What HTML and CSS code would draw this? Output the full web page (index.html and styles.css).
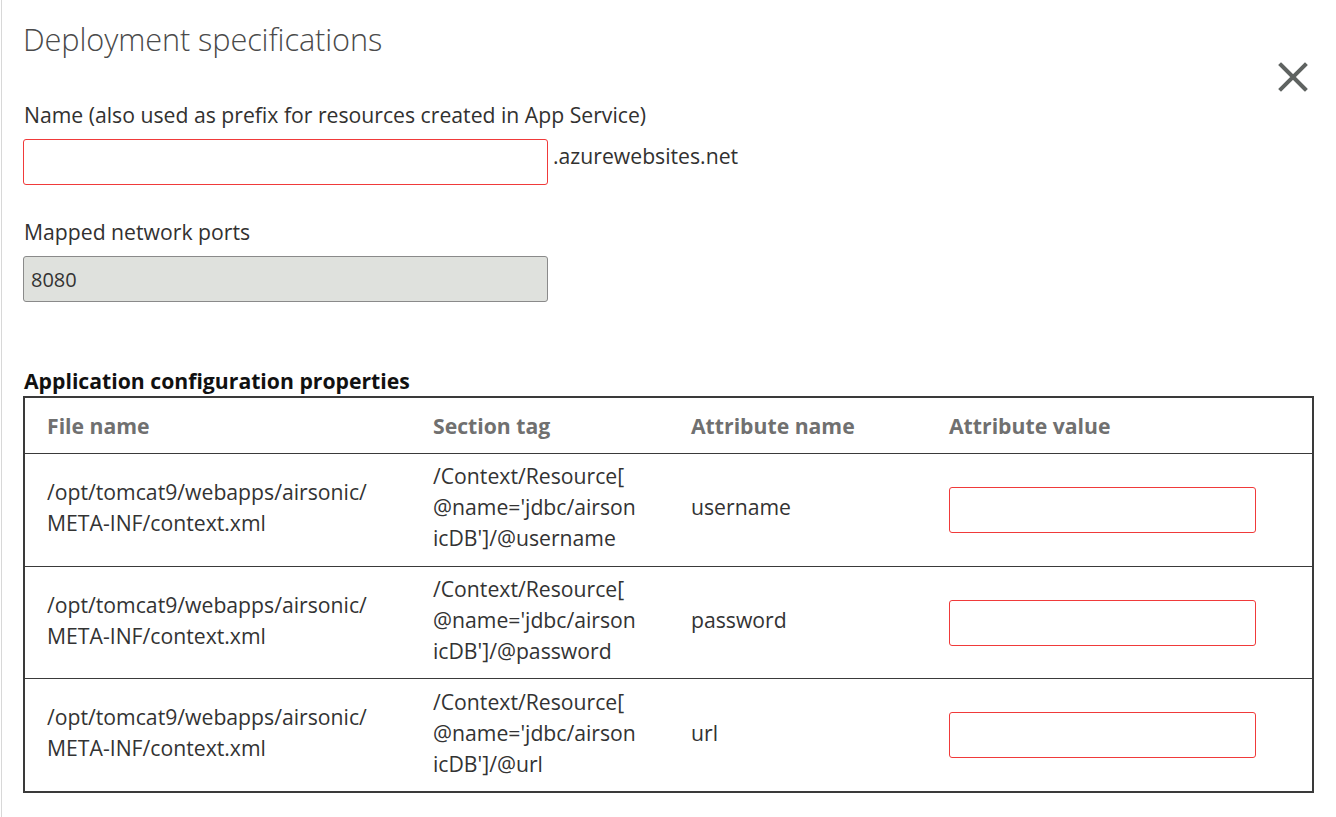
FILE: index.html
```html
<!DOCTYPE html>
<html>
<head>
<meta charset="utf-8">
<link rel="stylesheet" href="styles.css">
</head>
<body>
<div class="panel">
  <h1 class="title">Deployment specifications</h1>
  <button class="close" aria-label="Close">
    <svg width="30" height="30" viewBox="0 0 30 30"><path d="M3 3 L27 27 M27 3 L3 27" stroke="#5f6361" stroke-width="4" stroke-linecap="square"/></svg>
  </button>

  <div class="field">
    <label class="label">Name (also used as prefix for resources created in App Service)</label>
    <div class="row">
      <input class="input invalid" type="text">
      <span class="suffix">.azurewebsites.net</span>
    </div>
  </div>

  <div class="field field-ports">
    <label class="label">Mapped network ports</label>
    <input class="input disabled" type="text" value="8080" disabled>
  </div>

  <h2 class="section">Application configuration properties</h2>
  <div class="table">
    <div class="tr th">
      <div class="cell">File name</div>
      <div class="cell">Section tag</div>
      <div class="cell">Attribute name</div>
      <div class="cell">Attribute value</div>
    </div>
    <div class="tr">
      <div class="cell">/opt/tomcat9/webapps/airsonic/<br>META-INF/context.xml</div>
      <div class="cell">/Context/Resource[<br>@name='jdbc/airson<br>icDB']/@username</div>
      <div class="cell">username</div>
      <div class="cell cell-input"><input class="input invalid small" type="text"></div>
    </div>
    <div class="tr">
      <div class="cell">/opt/tomcat9/webapps/airsonic/<br>META-INF/context.xml</div>
      <div class="cell">/Context/Resource[<br>@name='jdbc/airson<br>icDB']/@password</div>
      <div class="cell">password</div>
      <div class="cell cell-input"><input class="input invalid small" type="text"></div>
    </div>
    <div class="tr">
      <div class="cell">/opt/tomcat9/webapps/airsonic/<br>META-INF/context.xml</div>
      <div class="cell">/Context/Resource[<br>@name='jdbc/airson<br>icDB']/@url</div>
      <div class="cell">url</div>
      <div class="cell cell-input"><input class="input invalid small" type="text"></div>
    </div>
  </div>
</div>
</body>
</html>
```

FILE: styles.css
```css
html, body {
  margin: 0;
  padding: 0;
  background: #fff;
}
body {
  font-family: "Open Sans", "Noto Sans", sans-serif;
  color: #333;
  padding-left: 1px;
}
.panel {
  position: relative;
  border-left: 1px solid #d8d8d8;
  min-height: 817px;
  box-sizing: border-box;
  padding: 19px 22px 0 21px;
}
.title {
  margin: 0;
  font-weight: 300;
  font-size: 30.7px;
  line-height: 40px;
  color: #4a4a4a;
  letter-spacing: -0.1px;
}
.close {
  position: absolute;
  top: 62px;
  right: 28px;
  background: none;
  border: 0;
  padding: 0;
  width: 30px;
  height: 30px;
}
.field {
  margin-top: 42px;
}
.label {
  display: block;
  font-size: 21.2px;
  line-height: 28px;
  color: #323130;
  margin-left: 1px;
}
.row {
  display: flex;
  align-items: flex-start;
  margin-top: 10px;
}
.input {
  box-sizing: border-box;
  width: 525px;
  height: 46px;
  border: 1px solid #8a8886;
  border-radius: 3px;
  font-family: inherit;
  font-size: 20px;
  padding: 0 7px;
  background: #fff;
  outline: none;
  display: block;
}
.input.invalid {
  border-color: #f03a3a;
}
.input.disabled {
  background: #dfe1dd;
  border-color: #8a8a8a;
  color: #333;
  margin-top: 10px;
}
.suffix {
  font-size: 21.2px;
  line-height: 28px;
  color: #323130;
  margin-left: 5px;
  margin-top: 3px;
}
.field-ports {
  margin-top: 33px;
}
.section {
  margin: 65px 0 0 1px;
  font-size: 21.2px;
  line-height: 28px;
  font-weight: 700;
  color: #111;
}
.table {
  margin-top: 1px;
  border: 2px solid #3a3a3a;
  width: 1291px;
  box-sizing: border-box;
  display: flex;
  flex-direction: column;
}
.tr {
  display: grid;
  grid-template-columns: 386px 258px 258px 1fr;
  height: 112.7px;
  align-items: center;
  border-top: 1px solid #3a3a3a;
  box-sizing: border-box;
}
.tr.th {
  height: 55px;
  border-top: 0;
}
.tr.th .cell {
  font-weight: 700;
  color: #707070;
  padding-bottom: 0;
}
.cell {
  padding-left: 22px;
  padding-bottom: 6px;
  font-size: 21.2px;
  line-height: 31px;
  color: #333;
}
.cell.cell-input {
  padding-bottom: 0;
}
.input.small {
  width: 307px;
  height: 46px;
}
```
